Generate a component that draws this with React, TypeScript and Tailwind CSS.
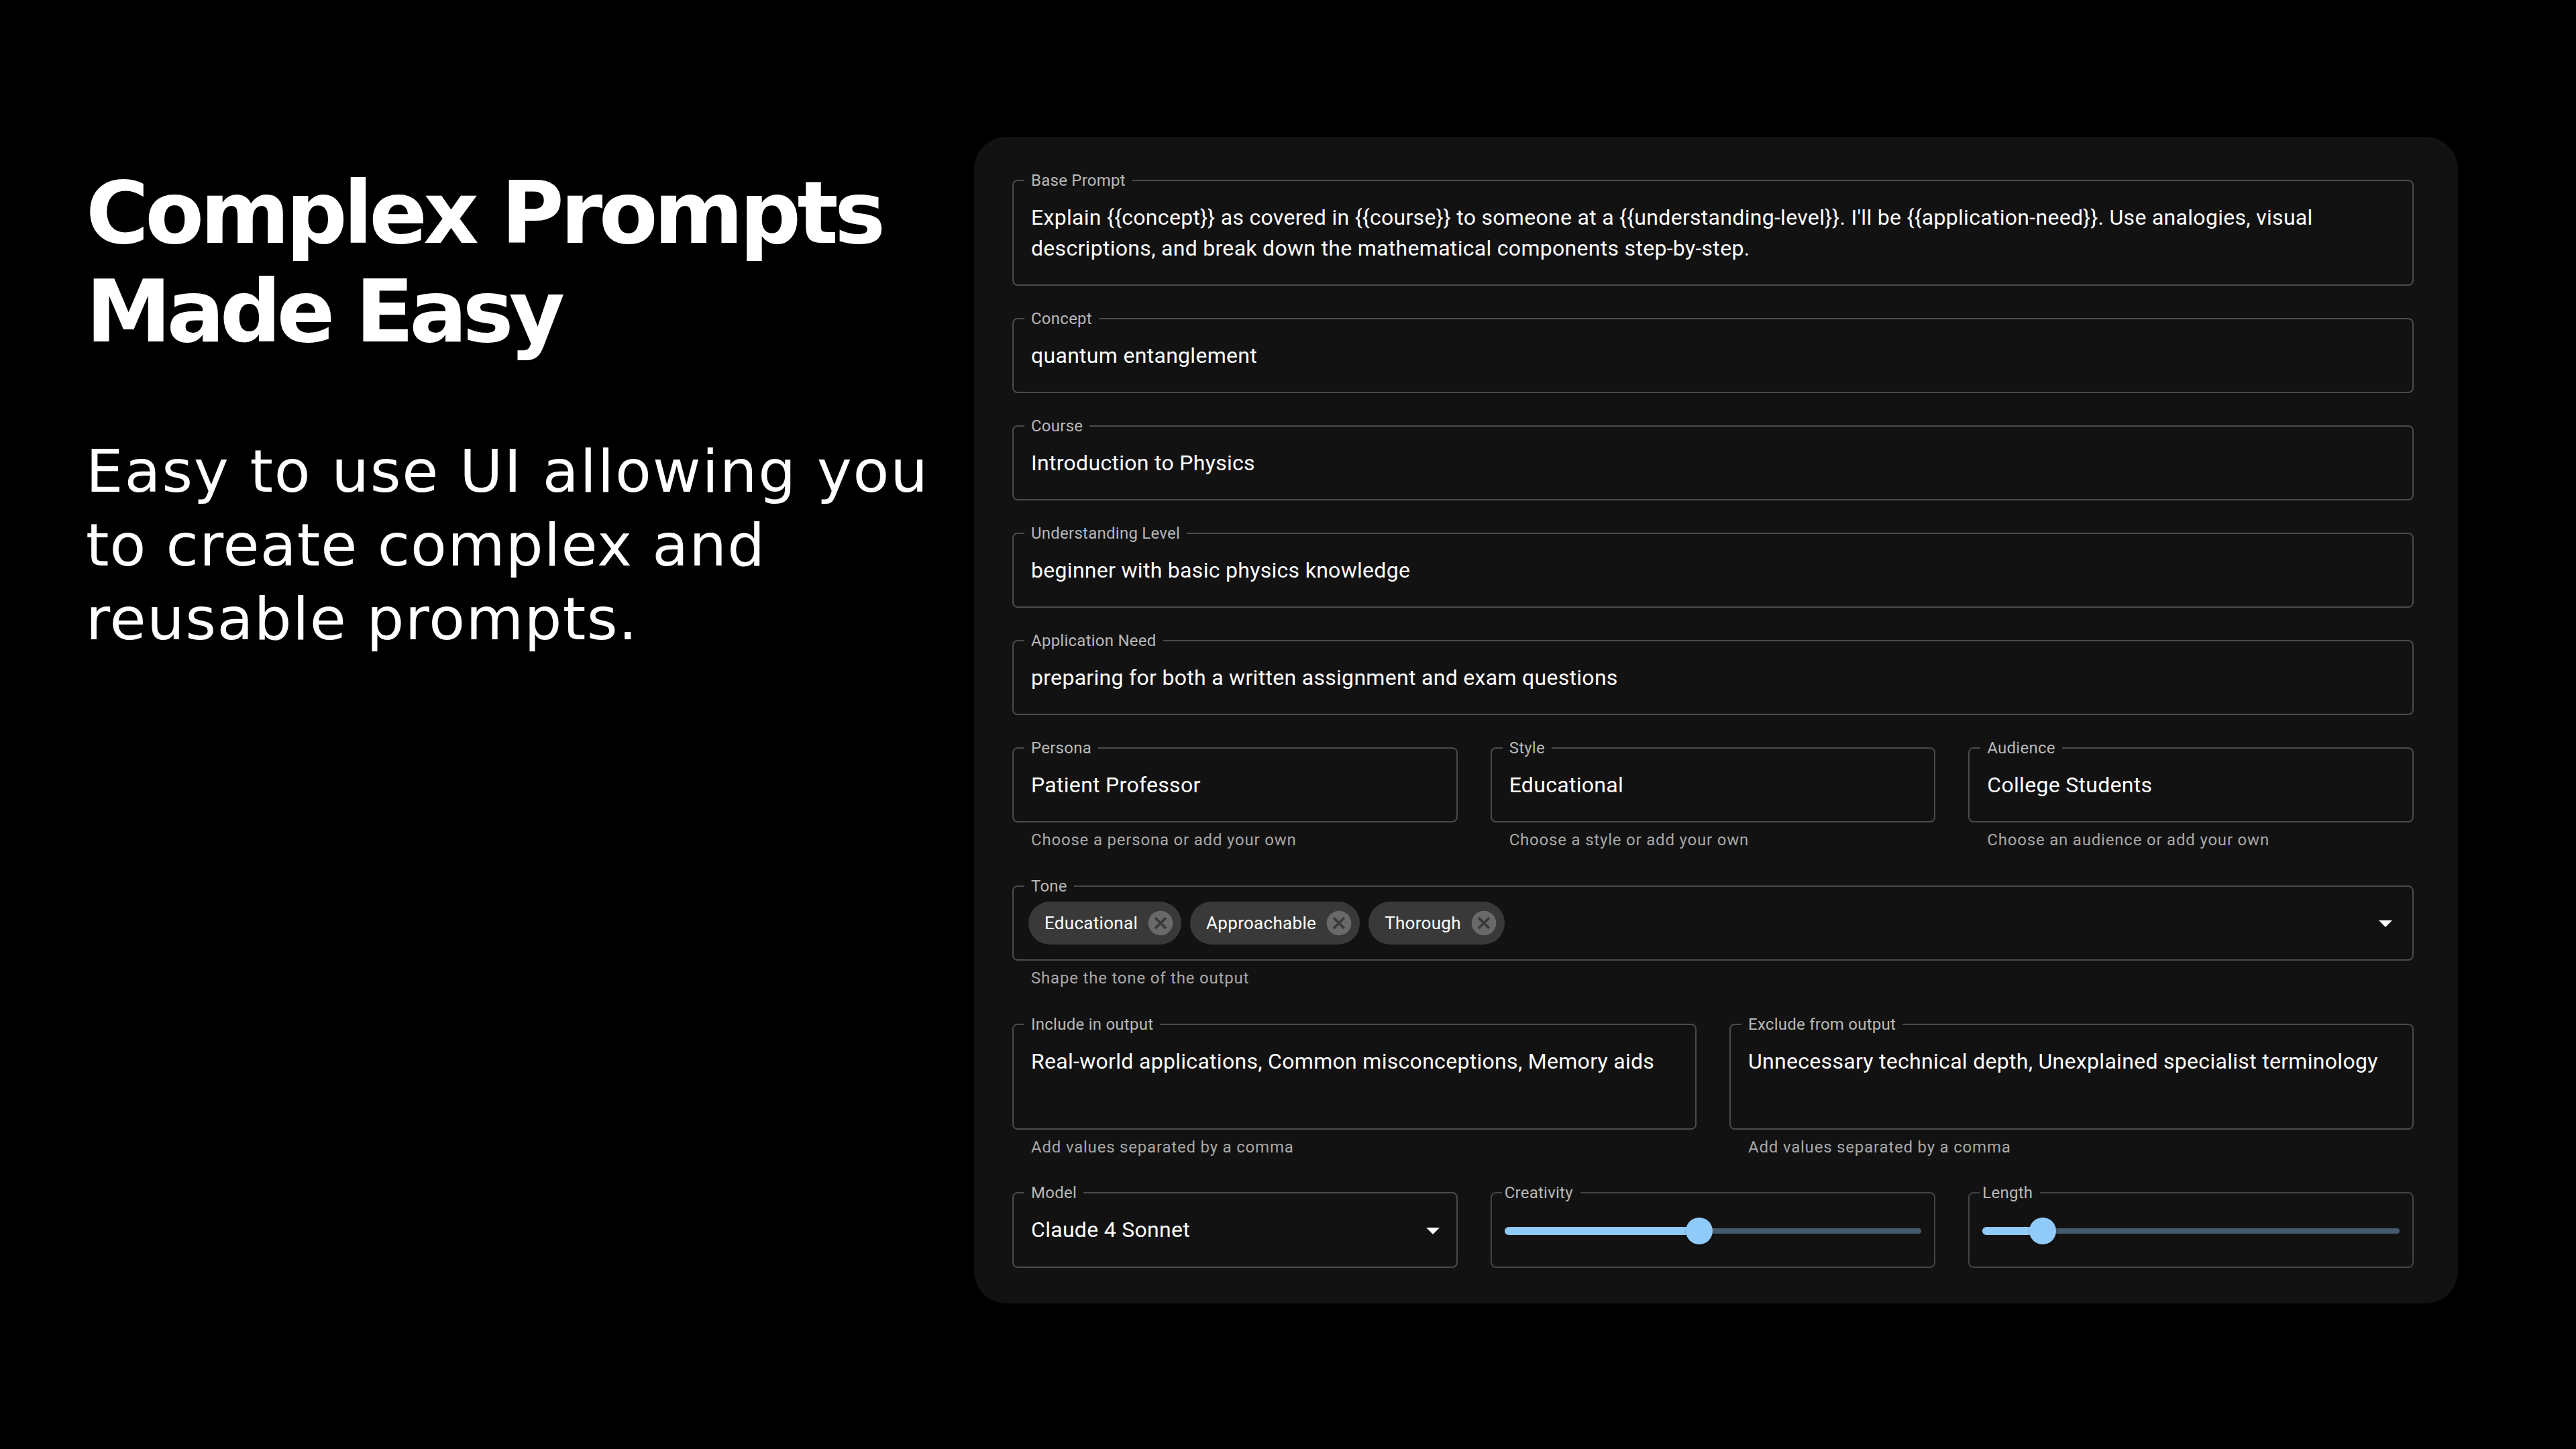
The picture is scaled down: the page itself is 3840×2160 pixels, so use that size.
import React from 'react';

interface FieldProps {
    label: string;
    helper?: string;
    slider?: boolean;
    children: React.ReactNode;
}

const BASE_PROMPT =
    "Explain {{concept}} as covered in {{course}} to someone at a {{understanding-level}}. I'll be {{application-need}}. Use analogies, visual descriptions, and break down the mathematical components step-by-step.";

const Field: React.FC<FieldProps> = ({ label, helper, slider, children }) => (
    <div className="min-w-0">
        <fieldset className={`border-2 ${slider ? 'border-[#444444]' : 'border-[#4b4b4b]'} rounded-[8px] m-0 p-0`}>
            <legend className={`${slider ? 'ml-[15px] pl-[4px] pr-[11px]' : 'ml-[16px] px-[10px]'} h-[32px] text-[24px] leading-[32px] tracking-[0.25px] text-[#b8b8b8]`}>
                {label}
            </legend>
            {children}
        </fieldset>
        {helper && (
            <p className="mt-[6px] pl-[28px] text-[24px] leading-[40px] tracking-[0.8px] text-[#a8a8a8]">{helper}</p>
        )}
    </div>
);

const TextValue: React.FC<{ lines?: number; children: React.ReactNode }> = ({ lines = 1, children }) => (
    <div className={`px-[26px] pt-[16px] pb-[31px] text-[32px] leading-[46px] tracking-[0.3px] text-white ${lines === 2 ? 'h-[139px]' : 'h-[93px]'}`}>
        {children}
    </div>
);

const DropArrow: React.FC = () => (
    <svg viewBox="0 0 24 24" className="w-[48px] h-[48px] shrink-0 fill-white">
        <path d="M7 10l5 5 5-5z" />
    </svg>
);

const Chip: React.FC<{ label: string }> = ({ label }) => (
    <div className="h-[64px] rounded-full bg-[#393939] flex items-center pl-[24px] pr-[9px] text-[26px] tracking-[0.3px] text-white">
        <span className="mr-[12px]">{label}</span>
        <svg viewBox="0 0 24 24" className="w-[44px] h-[44px] fill-[#696969]">
            <path d="M12 2C6.47 2 2 6.47 2 12s4.47 10 10 10 10-4.47 10-10S17.53 2 12 2zm5 13.59L15.59 17 12 13.41 8.41 17 7 15.59 10.59 12 7 8.41 8.41 7 12 10.59 15.59 7 17 8.41 13.41 12 17 15.59z" />
        </svg>
    </div>
);

const SliderField: React.FC<{ label: string; value: number }> = ({ label, value }) => (
    <Field label={label} slider>
        <div className="h-[94px] px-[19px] pt-[21px]">
            <div className="relative h-[40px] flex items-center">
                <div className="w-full h-[8px] rounded-full bg-[#455a6d]" />
                <div className="absolute left-0 h-[12px] rounded-full bg-[#90caf9]" style={{ width: `${value}%` }} />
                <div
                    className="absolute w-[40px] h-[40px] rounded-full bg-[#90caf9] -translate-x-1/2 shadow-[0_3px_3px_rgba(0,0,0,0.25)]"
                    style={{ left: `${value}%` }}
                />
            </div>
        </div>
    </Field>
);

const App: React.FC = () => {
    return (
        <div className="w-[3840px] h-[2160px] bg-black flex font-['Roboto',sans-serif] overflow-hidden">
            <div className="w-[1452px] shrink-0 pl-[128px] pt-[244px] text-white font-['DejaVu_Sans',sans-serif]">
                <h1 className="text-[128px] leading-[147px] font-bold">
                    <span className="block tracking-[-5.7px]">Complex Prompts</span>
                    <span className="block tracking-[-7px]">Made Easy</span>
                </h1>
                <p className="mt-[110px] text-[88px] leading-[110px]">
                    <span className="block tracking-[1.8px]">Easy to use UI allowing you</span>
                    <span className="block tracking-[1.1px]">to create complex and</span>
                    <span className="block tracking-[1.35px]">reusable prompts.</span>
                </p>
            </div>

            <div className="w-[2212px] shrink-0 mt-[204px] self-start bg-[#121212] rounded-[48px] pt-[49px] pb-[53px] pl-[57px] pr-[66px] flex flex-col gap-[33px]">
                <Field label="Base Prompt">
                    <TextValue lines={2}>{BASE_PROMPT}</TextValue>
                </Field>
                <Field label="Concept">
                    <TextValue>quantum entanglement</TextValue>
                </Field>
                <Field label="Course">
                    <TextValue>Introduction to Physics</TextValue>
                </Field>
                <Field label="Understanding Level">
                    <TextValue>beginner with basic physics knowledge</TextValue>
                </Field>
                <Field label="Application Need">
                    <TextValue>preparing for both a written assignment and exam questions</TextValue>
                </Field>

                <div className="grid grid-cols-3 gap-x-[49px]">
                    <Field label="Persona" helper="Choose a persona or add your own">
                        <TextValue>Patient Professor</TextValue>
                    </Field>
                    <Field label="Style" helper="Choose a style or add your own">
                        <TextValue>Educational</TextValue>
                    </Field>
                    <Field label="Audience" helper="Choose an audience or add your own">
                        <TextValue>College Students</TextValue>
                    </Field>
                </div>

                <Field label="Tone" helper="Shape the tone of the output">
                    <div className="h-[93px] pl-[22px] pr-[16px] pt-[7px] flex items-start justify-between">
                        <div className="flex gap-[13px]">
                            <Chip label="Educational" />
                            <Chip label="Approachable" />
                            <Chip label="Thorough" />
                        </div>
                        <div className="pt-[8px]">
                            <DropArrow />
                        </div>
                    </div>
                </Field>

                <div className="grid grid-cols-2 gap-x-[49px]">
                    <Field label="Include in output" helper="Add values separated by a comma">
                        <TextValue lines={2}>Real-world applications, Common misconceptions, Memory aids</TextValue>
                    </Field>
                    <Field label="Exclude from output" helper="Add values separated by a comma">
                        <TextValue lines={2}>Unnecessary technical depth, Unexplained specialist terminology</TextValue>
                    </Field>
                </div>

                <div className="grid grid-cols-3 gap-x-[49px] -mt-[1px]">
                    <Field label="Model">
                        <div className="h-[94px] pl-[26px] pr-[11px] pt-[16px] flex items-start justify-between text-[32px] leading-[46px] tracking-[0.3px] text-white">
                            <span>Claude 4 Sonnet</span>
                            <DropArrow />
                        </div>
                    </Field>
                    <SliderField label="Creativity" value={46.65} />
                    <SliderField label="Length" value={14.5} />
                </div>
            </div>
        </div>
    );
};

export default App;
